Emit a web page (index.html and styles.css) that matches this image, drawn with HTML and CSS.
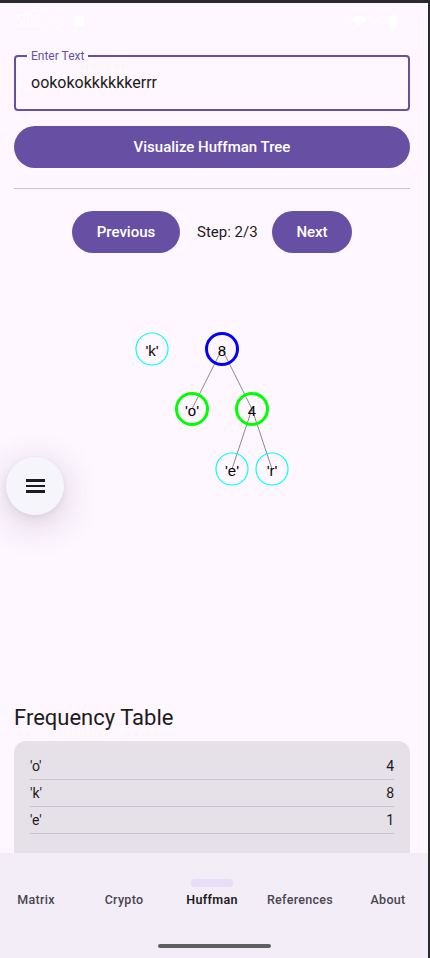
FILE: index.html
```html
<!DOCTYPE html>
<html>
<head>
<meta charset="utf-8">
<link rel="stylesheet" href="styles.css">
</head>
<body>
<div class="screen">
  <div class="statusbar">
    <div class="sb-left">
      <span class="time">5:05</span>
      <svg class="sb-icon" width="12" height="13" viewBox="0 0 12 13"><path d="M6 1 L11 3 V6.5 C11 9.5 8.8 11.5 6 12.5 C3.2 11.5 1 9.5 1 6.5 V3 Z" fill="none" stroke="#fff" stroke-width="1.6"/><path d="M4 4 L8 9" stroke="#fff" stroke-width="1.4"/></svg>
      <svg class="sb-icon" width="11" height="13" viewBox="0 0 11 13"><path d="M3 1 H10 V12 H1 V3 Z" fill="#fff"/></svg>
    </div>
    <div class="sb-right">
      <svg width="16" height="13" viewBox="0 0 16 13"><path d="M0 3.5 C4.5 -0.8 11.5 -0.8 16 3.5 L8 12.5 Z" fill="#fff"/></svg>
      <svg width="12" height="12" viewBox="0 0 12 12"><path d="M12 0 V12 H0 Z" fill="none" stroke="#fff" stroke-width="1.6"/></svg>
      <svg width="8" height="14" viewBox="0 0 8 14"><path d="M2 1 H6 V2 H8 V14 H0 V2 H2 Z" fill="#fff"/></svg>
    </div>
  </div>

  <div class="content">
    <div class="field">
      <span class="field-label">Enter Text</span>
      <span class="field-value">ookokokkkkkkerrr</span>
    </div>
    <button class="btn btn-wide">Visualize Huffman Tree</button>
    <div class="divider"></div>
    <div class="stepper">
      <button class="btn btn-prev">Previous</button>
      <span class="step">Step: 2/3</span>
      <button class="btn btn-next">Next</button>
    </div>

    <svg class="tree" width="414" height="447" viewBox="0 253 414 447">
      <g class="edges">
        <line x1="222" y1="349" x2="192" y2="409"/>
        <line x1="222" y1="349" x2="252" y2="409"/>
        <line x1="252" y1="409" x2="232" y2="469"/>
        <line x1="252" y1="409" x2="272" y2="469"/>
      </g>
      <circle class="leaf" cx="152" cy="349" r="16"/>
      <circle class="root" cx="222" cy="349" r="15.5"/>
      <circle class="mid" cx="192" cy="409" r="15.5"/>
      <circle class="mid" cx="252" cy="409" r="15.5"/>
      <circle class="leaf" cx="232" cy="469" r="16"/>
      <circle class="leaf" cx="272" cy="469" r="16"/>
      <g class="labels">
        <text x="152" y="350">'k'</text>
        <text x="222" y="350">8</text>
        <text x="192" y="410">'o'</text>
        <text x="252" y="410">4</text>
        <text x="232" y="470">'e'</text>
        <text x="272" y="470">'r'</text>
      </g>
    </svg>

    <h2 class="section-title">Frequency Table</h2>
    <div class="card">
      <div class="row"><span>'o'</span><span>4</span></div>
      <div class="row"><span>'k'</span><span>8</span></div>
      <div class="row"><span>'e'</span><span>1</span></div>
    </div>
  </div>

  <button class="fab" aria-label="menu">
    <span class="bar"></span><span class="bar"></span><span class="bar"></span>
  </button>

  <nav class="navbar">
    <div class="nav-items">
      <div class="nav-item"><span class="nav-label">Matrix</span></div>
      <div class="nav-item"><span class="nav-label">Crypto</span></div>
      <div class="nav-item active"><span class="indicator"></span><span class="nav-label">Huffman</span></div>
      <div class="nav-item"><span class="nav-label">References</span></div>
      <div class="nav-item"><span class="nav-label">About</span></div>
    </div>
    <div class="gesture"></div>
  </nav>
</div>
</body>
</html>
```

FILE: styles.css
```css
* { box-sizing: border-box; }
html, body {
  margin: 0;
  padding: 0;
  background: #2a2a2c;
  width: 430px;
  height: 958px;
  overflow: hidden;
}
.screen {
  position: relative;
  width: 428px;
  height: 955px;
  margin-top: 3px;
  background: #FEF7FF;
  font-family: Roboto, "Noto Sans", sans-serif;
  color: #1D1B20;
  display: flex;
  flex-direction: column;
  overflow: hidden;
}
.statusbar {
  height: 36px;
  flex: none;
  display: flex;
  justify-content: space-between;
  align-items: center;
  padding: 0 31px 0 15px;
  color: #fff;
}
.sb-left, .sb-right { display: flex; align-items: center; }
.sb-left { gap: 8px; }
.sb-right { gap: 5px; }
.time { font-size: 14px; }
.sb-icon { margin-left: 2px; }

.content {
  flex: 1;
  min-height: 0;
  overflow: hidden;
  padding: 16px 18px 0 14px;
  display: flex;
  flex-direction: column;
}
.field {
  position: relative;
  height: 56px;
  border: 2px solid #6750A4;
  border-radius: 4px;
  display: flex;
  align-items: center;
  padding: 0 15px;
  flex: none;
}
.field-label {
  position: absolute;
  left: 11px;
  top: -9px;
  padding: 0 4px;
  background: #FEF7FF;
  color: #6750A4;
  font-size: 12px;
  line-height: 16px;
}
.field-value {
  font-size: 16px;
  color: #1D1B20;
  margin-top: -1px;
}
.btn {
  border: none;
  background: #6750A4;
  color: #fff;
  font-family: Roboto, sans-serif;
  font-weight: 500;
  font-size: 15px;
  height: 42px;
  border-radius: 21px;
  padding: 0;
  flex: none;
}
.btn-wide {
  margin-top: 15px;
  width: 100%;
}
.divider {
  margin-top: 20px;
  height: 1px;
  background: #CAC4D0;
  flex: none;
}
.stepper {
  margin-top: 22px;
  display: flex;
  align-items: center;
  padding-left: 58px;
  flex: none;
}
.btn-prev { width: 108px; }
.btn-next { width: 80px; }
.step {
  font-size: 15px;
  margin: 0 17px;
  width: 58px;
  text-align: center;
  white-space: nowrap;
}
.tree {
  display: block;
  flex: none;
  margin-left: -14px;
}
.edges line { stroke: #8a8a8a; stroke-width: 1; }
.leaf { fill: none; stroke: #00FFFF; stroke-width: 1.2; }
.root { fill: none; stroke: #0000FF; stroke-width: 3; }
.mid { fill: none; stroke: #00FF00; stroke-width: 3; }
.labels text {
  font-family: "Liberation Sans", Arial, sans-serif;
  font-size: 15px;
  fill: #000;
  text-anchor: middle;
  dominant-baseline: central;
}
.section-title {
  margin: 4px 0 0;
  font-size: 22px;
  font-weight: 400;
  line-height: 28px;
  flex: none;
}
.card {
  margin-top: 9px;
  background: #E6E0E9;
  border-radius: 12px;
  padding: 12px 16px 60px;
  flex: none;
}
.row {
  display: flex;
  justify-content: space-between;
  align-items: center;
  height: 27px;
  font-size: 14px;
  border-bottom: 1px solid #CAC4D0;
}
.fab {
  position: absolute;
  left: 6px;
  top: 454px;
  width: 58px;
  height: 58px;
  border-radius: 50%;
  border: none;
  background: #F7F5FC;
  box-shadow: 0 8px 36px rgba(70, 50, 90, 0.24), 0 2px 6px rgba(0,0,0,0.06);
  display: flex;
  flex-direction: column;
  align-items: center;
  justify-content: center;
  gap: 3px;
  padding: 0;
}
.fab .bar {
  display: block;
  width: 19px;
  height: 2.5px;
  background: #1D1B20;
}
.navbar {
  flex: none;
  height: 105px;
  background: #F3EDF7;
  display: flex;
  flex-direction: column;
  align-items: center;
}
.nav-items {
  display: grid;
  grid-template-columns: repeat(5, 88px);
  justify-content: center;
  width: 100%;
  padding-right: 4px;
  margin-top: 26px;
}
.nav-item {
  display: flex;
  flex-direction: column;
  align-items: center;
  padding-top: 13px;
  position: relative;
}
.indicator {
  position: absolute;
  top: 0;
  width: 42px;
  height: 8px;
  border-radius: 4px;
  background: #E8DEF8;
}
.nav-label {
  font-size: 12.5px;
  font-weight: 500;
  color: #49454F;
  letter-spacing: 0.3px;
  line-height: 16px;
}
.active .nav-label { color: #1D1B20; font-weight: 600; }
.gesture {
  margin-top: 36px;
  width: 113px;
  height: 4px;
  border-radius: 2px;
  background: #5f5f62;
}
```
